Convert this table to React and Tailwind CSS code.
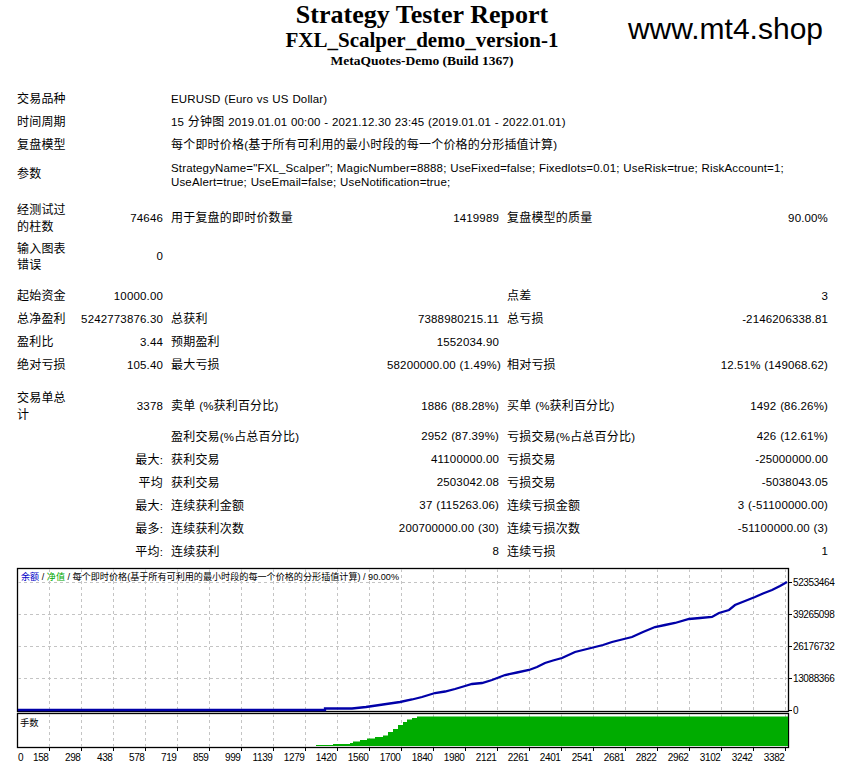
import React from "react";

const gridXs = Array.from({ length: 24 }, (_, i) => 49 + 32 * i);
const gridYs = [582, 614, 646, 678];
const xLabels = ["158","298","438","578","719","859","999","1139","1279","1420","1560","1700","1840","1980","2121","2261","2401","2541","2681","2822","2962","3102","3242","3382"];
const yLabels = [
  ["52353464", 582],
  ["39265098", 614],
  ["26176732", 646],
  ["13088366", 678],
  ["0", 710],
];

const blue = [
  [18,710],[325,710],[325,708.5],[352,708.5],[366,707],[383,704.5],[400,702],[412,699.5],[422,697],[435,693],[445,691.5],[455,689],[465,686],[472,684],[482,683],[492,680],[505,675],[517,672.5],[529,670],[537,667],[545,663],[553,660.5],[562,658],[575,652],[585,649.5],[595,647],[603,645],[612,642],[622,639.5],[632,637],[643,632],[655,627],[665,625],[675,623],[689,619],[700,618],[712,617],[719,613],[729,610],[735,605],[745,601],[755,597],[763,593.5],[772,590],[780,586],[787,582],
];

const green = [
  [316,746],[316,745],[333,745],[333,744],[350,744],[350,743],[353,743],[353,741.5],[360,741.5],[360,740],[367,740],[367,738.5],[375,738.5],[375,737],[383,737],[383,735.5],[388,735.5],[388,732],[393,732],[393,729],[398,729],[398,725],[403,725],[403,722],[407,722],[407,719.5],[412,719.5],[412,718],[417,718],[417,716.5],[788,716.5],[788,746],
];

function Chart() {
  const font = '"Liberation Sans","Noto Sans CJK SC",sans-serif';
  return (
    <svg width="844" height="198" viewBox="0 566 844 198" className="block" style={{ fontFamily: font }}>
      <rect x="17.5" y="568.5" width="771" height="143" fill="white" stroke="black" strokeWidth="1.3" />
      <rect x="17.5" y="713.5" width="771" height="34" fill="white" stroke="black" strokeWidth="1.3" />
      {gridXs.map((x) => (
        <g key={x}>
          <line x1={x + 0.5} y1="569" x2={x + 0.5} y2="711" stroke="#c4c4c4" strokeDasharray="3 3" />
          <line x1={x + 0.5} y1="714" x2={x + 0.5} y2="747" stroke="#c4c4c4" strokeDasharray="3 3" />
          <line x1={x + 0.5} y1="748" x2={x + 0.5} y2="751" stroke="black" />
        </g>
      ))}
      {gridYs.map((y) => (
        <line key={y} x1="18" y1={y + 0.5} x2="788" y2={y + 0.5} stroke="#c4c4c4" strokeDasharray="3 3" />
      ))}
      {yLabels.map(([t, y]) => (
        <g key={t}>
          <line x1="789" y1={y + 0.5} x2="792" y2={y + 0.5} stroke="black" />
          <text x="793" y={y + 4} fontSize="10" letterSpacing="-0.4" fill="black">{t}</text>
        </g>
      ))}
      <text x="21" y="580" fontSize="9.1" fill="black">
        <tspan fill="#0000c8">余额</tspan>
        <tspan> / </tspan>
        <tspan fill="#00a800">净值</tspan>
        <tspan> / 每个即时价格(基于所有可利用的最小时段的每一个价格的分形插值计算) / 90.00%</tspan>
      </text>
      <text x="20" y="726" fontSize="9.3" fill="black">手数</text>
      <polygon points={green.map((p) => p.join(",")).join(" ")} fill="#00ac00" />
      <polyline points={blue.map((p) => p.join(",")).join(" ")} fill="none" stroke="#0000a8" strokeWidth="2.3" />
      <text x="18" y="761" fontSize="10" fill="black">0</text>
      {xLabels.map((t, i) => (
        <text key={t} x={gridXs[i] - 0.5} y="761" fontSize="10" letterSpacing="-0.4" textAnchor="end" fill="black">{t}</text>
      ))}
    </svg>
  );
}

const CJK = /([\u2E80-\u9FFF\uFF00-\uFFEF\u3000-\u303F]+)/;

function T({ s }) {
  if (!s) return null;
  return s.split(CJK).map((p, i) =>
    i % 2 === 1 ? (
      <span key={i} className="text-[12px] tracking-[0.2px]">{p}</span>
    ) : (
      <span key={i}>{p}</span>
    )
  );
}

const rowBase = "grid grid-cols-[50px_88px_208px_112px_200px_113px] gap-x-2 items-center";

function Stat({ l1, v1, l2, v2, l3, v3, h = "h-[23px]", twoLine = false }) {
  return (
    <div className={`${rowBase} ${h}`}>
      <div className={twoLine ? "leading-[16.5px]" : ""}><T s={l1} /></div>
      <div className="text-right whitespace-nowrap"><T s={v1} /></div>
      <div className="whitespace-nowrap"><T s={l2} /></div>
      <div className="text-right whitespace-nowrap">{v2}</div>
      <div className="whitespace-nowrap"><T s={l3} /></div>
      <div className="text-right whitespace-nowrap">{v3}</div>
    </div>
  );
}

export default function App() {
  return (
    <div className="w-[844px] h-[764px] bg-white text-black overflow-hidden">
      <div className="grid grid-cols-[1fr_auto_1fr] h-[88px]">
        <div />
        <div className="flex flex-col items-center font-bold" style={{ fontFamily: '"Liberation Serif",serif' }}>
          <div className="text-[26px] leading-[29px] h-[29px]">Strategy Tester Report</div>
          <div className="text-[21px] leading-[23.5px] h-[23.5px]">FXL_Scalper_demo_version-1</div>
          <div className="text-[13.5px] leading-[16px]">MetaQuotes-Demo (Build 1367)</div>
        </div>
        <div className="flex justify-end pr-[21px] pt-[12px]">
          <div className="text-[30px] leading-[34px] h-[34px]" style={{ fontFamily: '"Liberation Sans",sans-serif' }}>www.mt4.shop</div>
        </div>
      </div>

      <div className="pl-[17px] text-[11.5px] tracking-[0.15px] [word-spacing:0.4px]" style={{ fontFamily: '"Liberation Sans","Noto Sans CJK SC",sans-serif' }}>
        <div className={`${rowBase} h-[23px]`}>
          <div><T s="交易品种" /></div>
          <div />
          <div className="col-span-4">EURUSD (Euro vs US Dollar)</div>
        </div>
        <div className={`${rowBase} h-[23px]`}>
          <div><T s="时间周期" /></div>
          <div />
          <div className="col-span-4 whitespace-nowrap"><T s="15 分钟图 2019.01.01 00:00 - 2021.12.30 23:45 (2019.01.01 - 2022.01.01)" /></div>
        </div>
        <div className={`${rowBase} h-[23px]`}>
          <div><T s="复盘模型" /></div>
          <div />
          <div className="col-span-4 whitespace-nowrap"><T s="每个即时价格(基于所有可利用的最小时段的每一个价格的分形插值计算)" /></div>
        </div>
        <div className={`${rowBase} h-[35px]`}>
          <div><T s="参数" /></div>
          <div />
          <div className="col-span-4 leading-[14px] whitespace-nowrap">
            StrategyName="FXL_Scalper"; MagicNumber=8888; UseFixed=false; Fixedlots=0.01; UseRisk=true; RiskAccount=1;
            <br />
            UseAlert=true; UseEmail=false; UseNotification=true;
          </div>
        </div>
        <div className="h-[7.5px]" />
        <Stat h="h-[38px]" twoLine l1="经测试过的柱数" v1="74646" l2="用于复盘的即时价数量" v2="1419989" l3="复盘模型的质量" v3="90.00%" />
        <Stat h="h-[39px]" twoLine l1="输入图表错误" v1="0" />
        <div className="h-[8.5px]" />
        <Stat l1="起始资金" v1="10000.00" l3="点差" v3="3" />
        <Stat l1="总净盈利" v1="5242773876.30" l2="总获利" v2="7388980215.11" l3="总亏损" v3="-2146206338.81" />
        <Stat l1="盈利比" v1="3.44" l2="预期盈利" v2="1552034.90" />
        <Stat l1="绝对亏损" v1="105.40" l2="最大亏损" v2="58200000.00 (1.49%)" l3="相对亏损" v3="12.51% (149068.62)" />
        <div className="h-[10.5px]" />
        <Stat h="h-[38px]" twoLine l1="交易单总计" v1="3378" l2="卖单 (%获利百分比)" v2="1886 (88.28%)" l3="买单 (%获利百分比)" v3="1492 (86.26%)" />
        <Stat l2="盈利交易(%占总百分比)" v2="2952 (87.39%)" l3="亏损交易(%占总百分比)" v3="426 (12.61%)" />
        <Stat v1="最大:" l2="获利交易" v2="41100000.00" l3="亏损交易" v3="-25000000.00" />
        <Stat v1="平均" l2="获利交易" v2="2503042.08" l3="亏损交易" v3="-5038043.05" />
        <Stat v1="最大:" l2="连续获利金额" v2="37 (115263.06)" l3="连续亏损金额" v3="3 (-51100000.00)" />
        <Stat v1="最多:" l2="连续获利次数" v2="200700000.00 (30)" l3="连续亏损次数" v3="-51100000.00 (3)" />
        <Stat v1="平均:" l2="连续获利" v2="8" l3="连续亏损" v3="1" />
      </div>
      <div className="h-[2px]" />
      <Chart />
    </div>
  );
}
